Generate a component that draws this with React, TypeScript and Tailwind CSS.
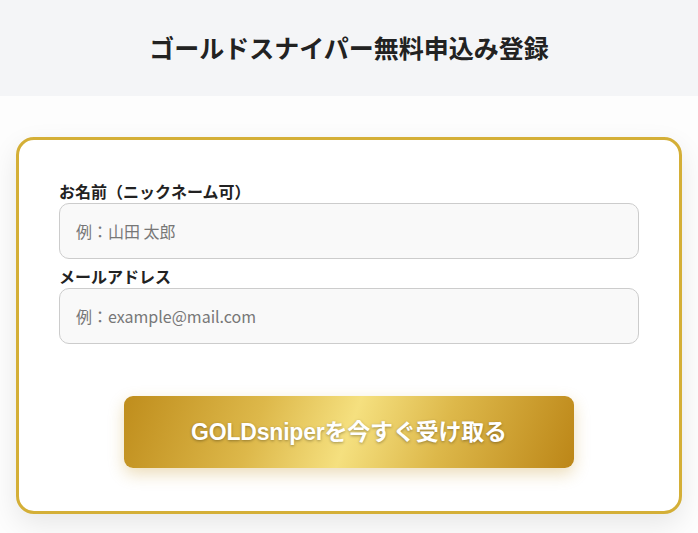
import React from "react";

const JP = "font-['Noto_Sans_CJK_JP','Noto_Sans',sans-serif]";

export default function App() {
  return (
    <div className={`min-h-[533px] bg-[#fdfdfd] ${JP}`}>
      <header className="flex h-[96px] items-center justify-center bg-[#f4f5f7]">
        <h1 className="text-[25px] font-bold text-[#222]">
          ゴールドスナイパー無料申込み登録
        </h1>
      </header>

      <main className="px-4 pt-[41px] pb-5">
        <form
          onSubmit={(e) => e.preventDefault()}
          className="rounded-[18px] border-[3px] border-[#d4af37] bg-white px-10 pt-[40px] pb-[43px] shadow-[0_10px_28px_rgba(0,0,0,0.09)]"
        >
          <label className="block text-[16px] font-bold leading-[22px] text-[#222]">
            お名前（ニックネーム可）
          </label>
          <input
            type="text"
            placeholder="例：山田 太郎"
            className="mt-[1px] block h-[56px] w-full rounded-[10px] border border-[#ccc] bg-[#f9f9f9] px-4 text-[16px] text-[#333] outline-none placeholder:text-[#777]"
          />

          <label className="mt-[6px] block text-[16px] font-bold leading-[22px] text-[#222]">
            メールアドレス
          </label>
          <input
            type="email"
            placeholder="例：example@mail.com"
            className="mt-[1px] block h-[56px] w-full rounded-[10px] border border-[#ccc] bg-[#f9f9f9] px-4 text-[16px] text-[#333] outline-none placeholder:text-[#777]"
          />

          <div className="mt-[52px] flex justify-center">
            <button
              type="submit"
              className="h-[72px] w-[450px] rounded-[9px] bg-[linear-gradient(110deg,#bf8d1c_0%,#ddb84a_30%,#f5e07f_50%,#ddb84a_70%,#bc8617_100%)] font-['Liberation_Sans','Noto_Sans_CJK_JP',sans-serif] text-[23px] font-bold tracking-[-0.2px] text-white shadow-[0_6px_16px_rgba(191,141,28,0.3)] [text-shadow:0_1px_3px_rgba(0,0,0,0.35)]"
            >
              GOLDsniperを今すぐ受け取る
            </button>
          </div>
        </form>
      </main>
    </div>
  );
}
